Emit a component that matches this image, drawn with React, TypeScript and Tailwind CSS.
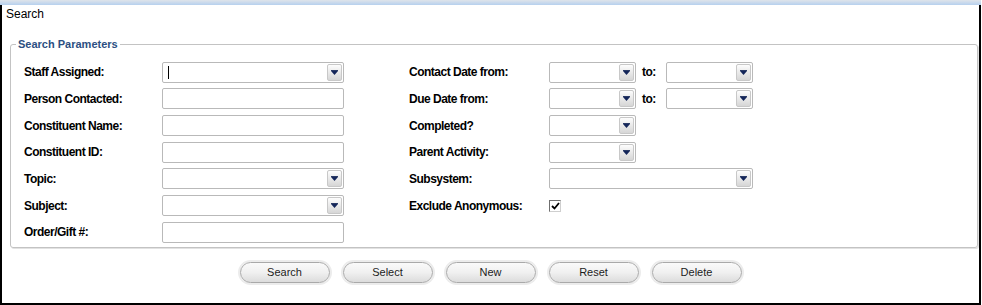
import React from "react";

const font = { fontFamily: '"Liberation Sans", Arial, sans-serif' };

function Arrow() {
  return (
    <div className="flex h-full w-[15px] items-center justify-center rounded-[2px] border border-[#c8c8c8] bg-gradient-to-b from-[#fdfdfd] to-[#d6d6d6]">
      <svg width="7" height="5" viewBox="0 0 7 5">
        <rect x="0" y="0" width="7" height="1" fill="#2a3a66" />
        <polygon points="0,1 7,1 3.5,5" fill="#14265a" />
      </svg>
    </div>
  );
}

function Select({ width, caret }: { width: string; caret?: boolean }) {
  return (
    <div
      className={`flex h-[21px] items-stretch rounded-[2px] border border-[#b9b9b9] bg-white p-px ${width}`}
    >
      <div className="flex flex-1 items-center pl-[4px]">
        {caret && <span className="h-[13px] w-px bg-black" />}
      </div>
      <Arrow />
    </div>
  );
}

function TextBox() {
  return (
    <input
      readOnly
      className="h-[21px] w-[182px] rounded-[2px] border border-[#b9b9b9] bg-white outline-none"
    />
  );
}

function Label({ children, w }: { children: React.ReactNode; w: string }) {
  return (
    <span className={`${w} shrink-0 text-[12px] font-bold tracking-[-0.5px] text-black`}>
      {children}
    </span>
  );
}

const leftRows: { label: string; control: React.ReactNode }[] = [
  { label: "Staff Assigned:", control: <Select width="w-[182px]" caret /> },
  { label: "Person Contacted:", control: <TextBox /> },
  { label: "Constituent Name:", control: <TextBox /> },
  { label: "Constituent ID:", control: <TextBox /> },
  { label: "Topic:", control: <Select width="w-[182px]" /> },
  { label: "Subject:", control: <Select width="w-[182px]" /> },
  { label: "Order/Gift #:", control: <TextBox /> },
];

function DateRange() {
  return (
    <div className="flex items-center">
      <Select width="w-[87px]" />
      <span className="ml-[6px] w-[24px] text-[12px] font-bold tracking-[-0.5px]">to:</span>
      <Select width="w-[87px]" />
    </div>
  );
}

function Checkbox() {
  return (
    <div className="flex h-[12px] w-[12px] items-center justify-center border border-t-[#6f6f6f] border-l-[#6f6f6f] border-r-[#cfcfcf] border-b-[#cfcfcf] bg-white">
      <svg width="9" height="8" viewBox="0 0 9 8">
        <polyline points="1,4 3.5,6.5 8,1" fill="none" stroke="#000" strokeWidth="1.8" />
      </svg>
    </div>
  );
}

const rightRows: { label: string; control: React.ReactNode }[] = [
  { label: "Contact Date from:", control: <DateRange /> },
  { label: "Due Date from:", control: <DateRange /> },
  { label: "Completed?", control: <Select width="w-[87px]" /> },
  { label: "Parent Activity:", control: <Select width="w-[87px]" /> },
  { label: "Subsystem:", control: <Select width="w-[204px]" /> },
  { label: "Exclude Anonymous:", control: <Checkbox /> },
];

const buttons = ["Search", "Select", "New", "Reset", "Delete"];

export default function App() {
  return (
    <div className="flex h-[305px] w-[981px] flex-col bg-white" style={font}>
      <div className="h-[5px] w-full bg-gradient-to-b from-[#dfe4ea] to-[#b6d0ee]" />
      <div className="flex flex-1 flex-col border-x-2 border-b-2 border-black">
        <div className="h-[17px] pl-[4px] pt-px text-[12px] leading-[16px] text-black">Search</div>
        <fieldset className="ml-[8px] mr-px mt-[15px] rounded-[3px] border border-[#c3c3c3] px-[5px] pb-px pt-[8px] shadow-[1px_1px_0_#e2e2e2]">
          <legend className="px-[2px] text-[11px] font-bold leading-[14px] text-[#2c4f82]">
            Search Parameters
          </legend>
          <div className="flex">
            <div className="flex flex-col pl-[8px]">
              {leftRows.map((r) => (
                <div key={r.label} className="flex h-[26.67px] items-center">
                  <Label w="w-[138px]">{r.label}</Label>
                  {r.control}
                </div>
              ))}
            </div>
            <div className="ml-[65px] flex flex-col">
              {rightRows.map((r) => (
                <div key={r.label} className="flex h-[26.67px] items-center">
                  <Label w="w-[140px]">{r.label}</Label>
                  {r.control}
                </div>
              ))}
            </div>
          </div>
        </fieldset>
        <div className="mt-[14px] flex justify-center gap-[13px]">
          {buttons.map((b) => (
            <button
              key={b}
              className="flex h-[21px] w-[90px] items-center justify-center rounded-full border border-[#a9a9a9] bg-gradient-to-b from-[#fafafa] via-[#f0f0f0] to-[#dcdcdc] text-[11px] text-[#1c1c1c] shadow-[0_0_0_2px_#ececec]"
            >
              {b}
            </button>
          ))}
        </div>
      </div>
    </div>
  );
}
